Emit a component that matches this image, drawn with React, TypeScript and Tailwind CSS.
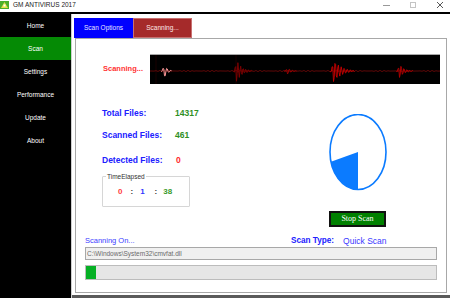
import React from "react";

type Burst = { c: number; amp: number; w: number; f: number; color: string; sw: number };

function burstPoints(b: Burst): string {
  const pts: string[] = [];
  for (let x = b.c - 3; x <= b.c + b.w; x += 0.7) {
    const t = x - b.c;
    const env = t < 0 ? Math.exp(t * 1.2) : Math.exp(-t / (b.w / 3));
    const y = 16 + b.amp * env * Math.sin(t * b.f);
    pts.push(`${x.toFixed(1)},${y.toFixed(1)}`);
  }
  return pts.join(" ");
}

function baseline(): string {
  const pts: string[] = [];
  for (let x = 0; x <= 290; x += 2) {
    const y = 16 + 0.6 * Math.sin(x * 1.7) * Math.sin(x * 0.13);
    pts.push(`${x},${y.toFixed(1)}`);
  }
  return pts.join(" ");
}

const bursts: Burst[] = [
  { c: 14, amp: 8, w: 8, f: 1.6, color: "#ff9a9a", sw: 1 },
  { c: 86, amp: 12, w: 16, f: 2.4, color: "#7a0000", sw: 1 },
  { c: 137, amp: 4, w: 10, f: 2.0, color: "#b00000", sw: 0.8 },
  { c: 183, amp: 13, w: 22, f: 2.1, color: "#c00000", sw: 1 },
  { c: 249, amp: 8, w: 14, f: 2.2, color: "#b00000", sw: 1 },
];

function Wave() {
  return (
    <svg width="290" height="29" viewBox="0 0 290 29" className="block">
      <line x1="6" y1="0" x2="6" y2="29" stroke="#2a0000" strokeWidth="0.6" />
      <line x1="86" y1="0" x2="86" y2="29" stroke="#2a0000" strokeWidth="0.6" />
      <polyline points={baseline()} fill="none" stroke="#7a0a0a" strokeWidth="0.8" />
      {bursts.map((b, i) => (
        <polyline key={i} points={burstPoints(b)} fill="none" stroke={b.color} strokeWidth={b.sw} />
      ))}
    </svg>
  );
}

function Pie() {
  const cx = 29, cy = 38, rx = 28, ry = 37.5;
  const a = (165 * Math.PI) / 180;
  const ex = cx + rx * Math.cos(a);
  const ey = cy + ry * Math.sin(a);
  return (
    <svg width="58" height="77" viewBox="0 0 58 77" className="block">
      <ellipse cx={cx} cy={cy} rx={rx} ry={ry} fill="white" stroke="#0b7bff" strokeWidth="1.6" />
      <path d={`M${cx} ${cy} L${cx} ${cy + ry} A${rx} ${ry} 0 0 1 ${ex.toFixed(2)} ${ey.toFixed(2)} Z`} fill="#0b7bff" />
    </svg>
  );
}

const navItems = ["Home", "Scan", "Settings", "Performance", "Update", "About"];

export default function App() {
  return (
    <div className="w-[450px] h-[298px] bg-white overflow-hidden flex flex-col font-['Liberation_Sans',Arial,sans-serif]">
      {/* Title bar */}
      <div className="h-[12px] flex items-center shrink-0">
        <svg width="9" height="8" viewBox="0 0 9 8" className="ml-[0px] mb-[3px]">
          <rect x="0" y="0" width="9" height="8" fill="#4caf2a" />
          <path d="M1 7 L4.5 1 L8 7 Z" fill="#e5e04a" />
          <rect x="3.5" y="3.5" width="2" height="2" fill="#ffffff" />
        </svg>
        <span className="ml-[4px] text-[6.5px] leading-[8px] text-[#222] mb-[3px]">GM ANTIVIRUS 2017</span>
        <div className="ml-auto flex items-center mr-[7px] mb-[2px]">
          <div className="w-[7px] h-[1px] bg-[#999]" />
          <div className="ml-[20px] w-[6px] h-[6px] border border-[#c4c4c4]" />
          <svg width="6" height="6" viewBox="0 0 6 6" className="ml-[21px]">
            <path d="M0 0 L6 6 M6 0 L0 6" stroke="#444" strokeWidth="0.9" />
          </svg>
        </div>
      </div>
      <div className="h-[2px] bg-black shrink-0" />

      <div className="flex flex-1">
        {/* Sidebar */}
        <div className="w-[71px] bg-black flex flex-col">
          {navItems.map((n) => (
            <div
              key={n}
              className={`h-[23px] flex items-center justify-center text-[6.5px] text-white ${n === "Scan" ? "bg-[#058a05]" : ""}`}
            >
              {n}
            </div>
          ))}
        </div>

        {/* Right pane */}
        <div className="flex-1 flex flex-col border-l border-[#cfcfcf]">
          {/* Tabs */}
          <div className="flex mt-[4px] ml-[2px] h-[20px]">
            <div className="w-[59px] h-full bg-[#0000ff] flex items-center justify-center text-[6.5px] text-[#e8e8ff]">
              Scan Options
            </div>
            <div className="w-[59px] h-full bg-[#a52a2a] border border-[#c87070] flex items-center justify-center text-[6.5px] text-[#ffe8e8]">
              Scanning...
            </div>
          </div>

          {/* Panel */}
          <div className="ml-[3px] w-[372px] h-[255px] border border-[#a8a8a8] flex flex-col">
            {/* Wave row */}
            <div className="flex items-center mt-[15px]">
              <div className="w-[67px] text-right text-[7.5px] font-bold text-[#ff3333] leading-[10px]">Scanning...</div>
              <div className="ml-[7px] w-[290px] h-[30px] bg-black border-t border-[#a8a8a8]">
                <Wave />
              </div>
            </div>

            {/* Middle */}
            <div className="flex h-[143px]">
              <div className="w-[224px] pl-[26px] flex flex-col">
                <div className="flex mt-[24px] h-[10px] items-center text-[8.5px] font-bold leading-[10px]">
                  <span className="w-[73px] text-[#2020ff]">Total Files:</span>
                  <span className="text-[#2f8f1f]">14317</span>
                </div>
                <div className="flex mt-[12px] h-[10px] items-center text-[8.5px] font-bold leading-[10px]">
                  <span className="w-[73px] text-[#2020ff]">Scanned Files:</span>
                  <span className="text-[#2f8f1f]">461</span>
                </div>
                <div className="flex mt-[15px] h-[10px] items-center text-[8.5px] font-bold leading-[10px]">
                  <span className="w-[74px] text-[#2020ff]">Detected Files:</span>
                  <span className="text-[#ff2a2a]">0</span>
                </div>
                <div className="relative mt-[11px] w-[88px] h-[31px] border border-[#d6d6d6] rounded-[1px]">
                  <span className="absolute -top-[5px] left-[3px] bg-white px-[1px] text-[6.5px] leading-[9px] text-[#333]">
                    TimeElapsed
                  </span>
                  <div className="flex items-center h-full text-[8px] font-bold leading-[10px] pl-[15px] pt-[1px]">
                    <span className="text-[#ff4040]">0</span>
                    <span className="ml-[8px] text-[#333]">:</span>
                    <span className="ml-[7px] text-[#3333ff]">1</span>
                    <span className="ml-[10px] text-[#333]">:</span>
                    <span className="ml-[6px] text-[#3a9a2a]">38</span>
                  </div>
                </div>
              </div>
              <div className="pl-[29px] pt-[30px] flex flex-col">
                <Pie />
                <div className="mt-[20px] w-[57px] h-[16px] bg-[#008000] border-2 border-[#111] flex items-center justify-center text-[8px] text-white font-['Liberation_Serif',serif] leading-[10px]">
                  Stop Scan
                </div>
              </div>
            </div>

            {/* Bottom */}
            <div className="flex items-center mt-[9px] h-[10px] leading-[10px] pl-[9px]">
              <span className="w-[206px] text-[7.5px] text-[#3b3bff]">Scanning On...</span>
              <span className="text-[8.2px] font-bold text-[#2020ff]">Scan Type:</span>
              <span className="ml-[9px] text-[8.5px] text-[#3a3aff]">Quick Scan</span>
            </div>
            <div className="ml-[9px] mt-[1px] w-[352px] h-[13px] bg-[#f0f0f0] border border-[#a8a8a8] flex items-center pl-[1px] text-[6.5px] text-[#6a6a6a] leading-[8px]">
              C:\Windows\System32\cmvfat.dll
            </div>
            <div className="ml-[9px] mt-[5px] w-[352px] h-[15px] bg-[#e6e6e6] border border-[#bcbcbc]">
              <div className="w-[10px] h-full bg-[#06b025]" />
            </div>
          </div>

          <div className="mt-[2px] h-[3px] bg-[#5a5a5a]" />
        </div>
      </div>
    </div>
  );
}
